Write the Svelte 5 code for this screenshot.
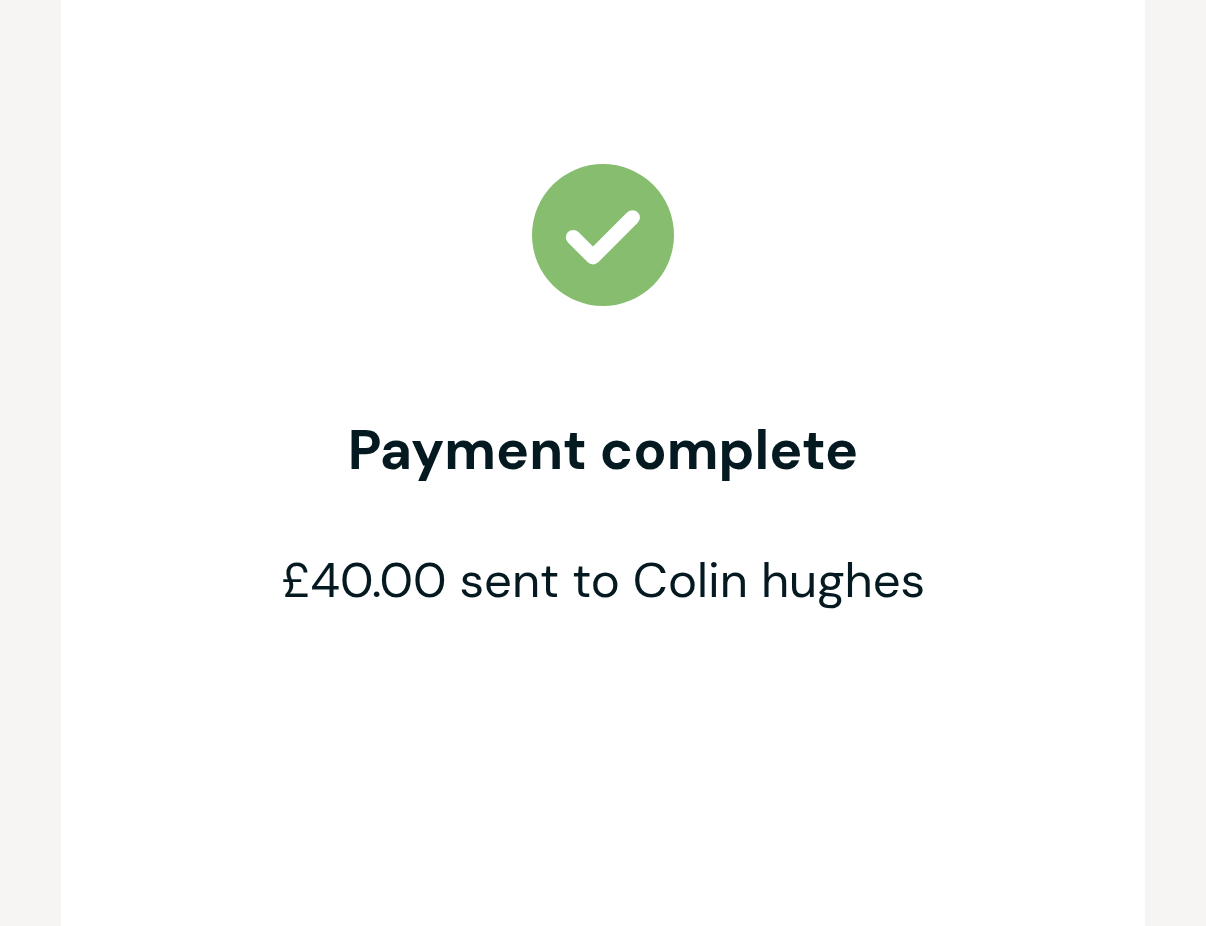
<script lang="ts">
  export let amount = 40
  export let recipient = 'Colin hughes'

  const formatter = new Intl.NumberFormat('en-GB', {
    style: 'currency',
    currency: 'GBP',
  })

  $: sent = formatter.format(amount)
</script>

<main class="page">
  <section class="panel">
    <svg class="status-icon" viewBox="0 0 142 142" aria-hidden="true">
      <circle cx="71" cy="71" r="71" />
      <path d="M41.2 73.3 L61 93.1 L100.5 53.6" />
    </svg>
    <h1>Payment complete</h1>
    <p>{sent} sent to {recipient}</p>
  </section>
</main>

<style>
  :global(body) {
    margin: 0;
    background: #f6f5f3;
  }

  .page {
    display: flex;
    min-height: 100vh;
    padding: 0 61px;
    box-sizing: border-box;
    font-family: 'DM Sans', Inter, 'Open Sans', sans-serif;
    color: #051a20;
  }

  .panel {
    flex: 1;
    display: flex;
    flex-direction: column;
    align-items: center;
    padding: 164px 24px;
    background: #fff;
    text-align: center;
  }

  .status-icon {
    width: 142px;
    height: 142px;
    margin-bottom: 108px;
  }

  circle {
    fill: #86bd6e;
  }

  path {
    fill: none;
    stroke: #fff;
    stroke-width: 14.8;
    stroke-linecap: round;
    stroke-linejoin: round;
  }

  h1 {
    margin: 0 0 58px;
    font-size: 55px;
    font-weight: 700;
    line-height: 72px;
  }

  p {
    margin: 0;
    font-size: 49px;
    line-height: 72px;
  }
</style>
